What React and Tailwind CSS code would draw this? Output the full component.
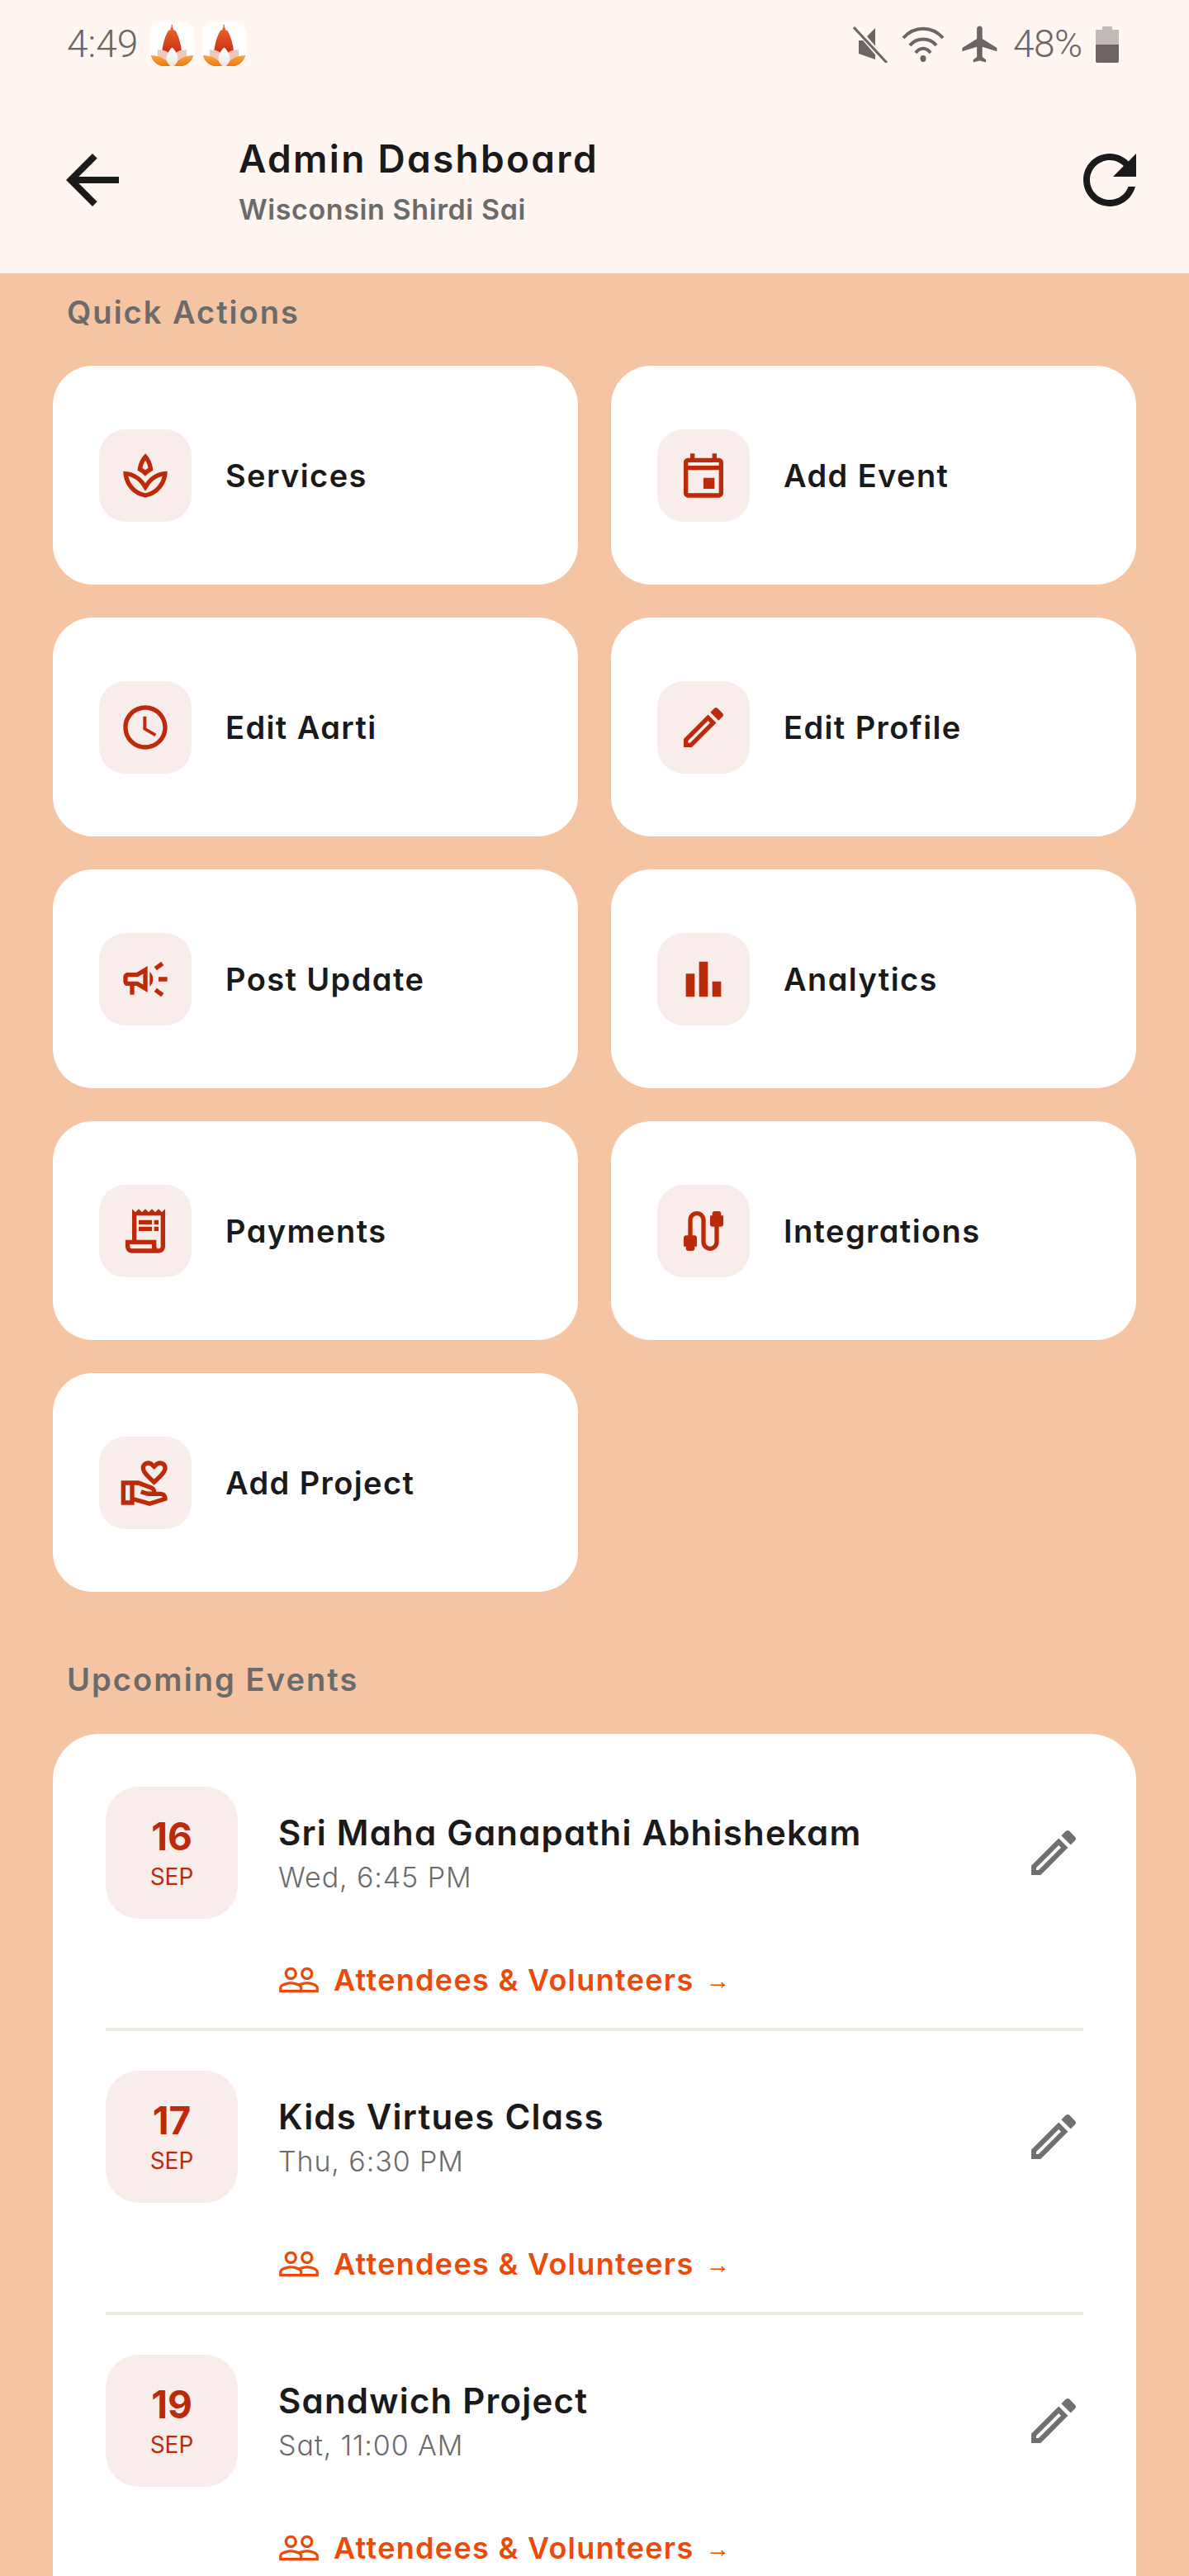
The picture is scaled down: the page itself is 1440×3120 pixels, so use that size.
import React from "react";

const P = {
  spa: "M15.49 9.63c-.18-2.79-1.31-5.51-3.44-7.65-2.15 2.14-3.35 4.86-3.59 7.65 1.28.68 2.46 1.56 3.49 2.63 1.03-1.06 2.21-1.94 3.54-2.63zm-3.45-4.5c.63 1.03 1.07 2.18 1.3 3.38-.47.3-.92.63-1.35.98-.42-.34-.87-.67-1.33-.97.25-1.2.71-2.35 1.38-3.39zM12 15.45c-.82-1.25-1.86-2.34-3.06-3.2-.13-.09-.27-.16-.4-.26.13.09.27.17.39.25C6.98 10.83 4.59 10 2 10c0 5.32 3.36 9.82 8.03 11.49.63.23 1.29.4 1.97.51.68-.12 1.33-.29 1.97-.51C18.64 19.82 22 15.32 22 10c-4.18 0-7.85 2.17-10 5.45zm1.32 4.15c-.44.15-.88.27-1.33.37-.44-.09-.87-.21-1.28-.36-3.29-1.18-5.7-3.99-6.45-7.35 1.1.26 2.15.71 3.12 1.33l-.02.01c.13.09.26.18.39.25l.07.04c.99.72 1.84 1.61 2.51 2.65L12 19.1l1.67-2.55c.69-1.05 1.55-1.95 2.53-2.66l.07-.05c.09-.05.18-.11.27-.17l-.01-.02c.98-.65 2.07-1.13 3.21-1.4-.75 3.37-3.15 6.18-6.42 7.35z",
  event: "M19 4h-1V2h-2v2H8V2H6v2H5c-1.11 0-1.99.9-1.99 2L3 20c0 1.1.89 2 2 2h14c1.1 0 2-.9 2-2V6c0-1.1-.9-2-2-2zm0 16H5V9.5h14V20zm0-12.5H5V6h14v1.5zM17 13h-5v5h5v-5z",
  clock: "M11.99 2C6.47 2 2 6.48 2 12s4.47 10 9.99 10C17.52 22 22 17.52 22 12S17.52 2 11.99 2zM12 20c-4.42 0-8-3.58-8-8s3.58-8 8-8 8 3.58 8 8-3.58 8-8 8zm.5-13H11v6l5.25 3.15.75-1.23-4.5-2.67z",
  edit: "M14.06 9.02l.92.92L5.92 19H5v-.92l9.06-9.06M17.66 3c-.25 0-.51.1-.7.29l-1.83 1.83 3.75 3.75 1.83-1.83c.39-.39.39-1.02 0-1.41l-2.34-2.34c-.2-.2-.45-.29-.71-.29zm-3.6 3.19L3 17.25V21h3.75L17.81 9.94l-3.75-3.75z",
  campaign: "M18 11v2h4v-2h-4zm-2 6.61c.96.71 2.21 1.65 3.2 2.39.4-.53.8-1.07 1.2-1.6-.99-.74-2.24-1.68-3.2-2.4-.4.54-.8 1.08-1.2 1.61zM20.4 5.6c-.4-.53-.8-1.07-1.2-1.6-.99.74-2.24 1.68-3.2 2.4.4.53.8 1.07 1.2 1.6.96-.72 2.21-1.65 3.2-2.4zM4 9c-1.1 0-2 .9-2 2v2c0 1.1.9 2 2 2h1v4h2v-4h1l5 3V6L8 9H4zm5.03 1.71L11 9.53v4.94l-1.97-1.18-.48-.29H4v-2h4.55l.48-.29zM15.5 12c0-1.33-.58-2.53-1.5-3.35v6.69c.92-.81 1.5-2.01 1.5-3.34z",
  bar: "M4 9.5h4V20H4zM10 4h4v16h-4zM16 13h4v7h-4z",
  receipt: "M19.5 3.5L18 2l-1.5 1.5L15 2l-1.5 1.5L12 2l-1.5 1.5L9 2 7.5 3.5 6 2v14H3v3c0 1.66 1.34 3 3 3h12c1.66 0 3-1.34 3-3V2l-1.5 1.5zM15 20H6c-.55 0-1-.45-1-1v-1h10v2zm4-1c0 .55-.45 1-1 1s-1-.45-1-1v-3H8V5h11v14zM9 7h6v2H9zM16 7h2v2h-2zM9 10h6v2H9zM16 10h2v2h-2z",
  cable: "M20 5V4c0-.55-.45-1-1-1h-2c-.55 0-1 .45-1 1v1h-1v4c0 .55.45 1 1 1h1v7c0 1.1-.9 2-2 2s-2-.9-2-2V7c0-2.21-1.79-4-4-4S5 4.79 5 7v7H4c-.55 0-1 .45-1 1v4h1v1c0 .55.45 1 1 1h2c.55 0 1-.45 1-1v-1h1v-4c0-.55-.45-1-1-1H7V7c0-1.1.9-2 2-2s2 .9 2 2v10c0 2.21 1.79 4 4 4s4-1.79 4-4v-7h1c.55 0 1-.45 1-1V5h-1z",
  hand: "M16 13c3.09-2.81 6-5.44 6-7.7C22 3.45 20.55 2 18.7 2c-1.04 0-2.05.49-2.7 1.25C15.34 2.49 14.34 2 13.3 2 11.45 2 10 3.45 10 5.3c0 2.26 2.91 4.89 6 7.7zm-2.7-9c.44 0 .89.21 1.18.55L16 6l1.52-1.45c.29-.34.74-.55 1.18-.55.74 0 1.3.56 1.3 1.3 0 1.12-2.04 3.17-4 4.99-1.96-1.82-4-3.87-4-4.99 0-.74.56-1.3 1.3-1.3zM19 16h-2c0-1.2-.75-2.28-1.87-2.7L8.97 11H1v11h6v-1.44l7 1.94 8-2.5v-1c0-1.66-1.34-3-3-3zM3 20v-7h2v7H3zm10.97.41L7 18.5V13h1.61l5.82 2.17c.34.13.57.46.57.83 0 0-1.99-.05-2.3-.15l-2.38-.79-.63 1.9 2.38.79c.51.17 1.04.26 1.58.26H19c.39 0 .74.23.9.56l-5.93 1.85z",
  back: "M20 11H7.83l5.59-5.59L12 4l-8 8 8 8 1.41-1.41L7.83 13H20v-2z",
  refresh: "M17.65 6.35C16.2 4.9 14.21 4 12 4c-4.42 0-7.99 3.58-7.99 8s3.57 8 7.99 8c3.73 0 6.84-2.55 7.73-6h-2.08c-.82 2.33-3.04 4-5.65 4-3.31 0-6-2.69-6-6s2.69-6 6-6c1.66 0 3.14.69 4.22 1.78L13 11h7V4l-2.35 2.35z",
  people: "M16.5 13c-1.2 0-3.07.34-4.5 1-1.43-.67-3.3-1-4.5-1C5.33 13 1 14.08 1 16.25V19h22v-2.75c0-2.17-4.33-3.25-6.5-3.25zm-4 4.5h-10v-1.25c0-.54 2.56-1.75 5-1.75s5 1.21 5 1.75v1.25zm9 0H14v-1.25c0-.46-.2-.86-.52-1.22.88-.3 1.96-.53 3.02-.53 2.44 0 5 1.21 5 1.75v1.25zM7.5 12c1.93 0 3.5-1.57 3.5-3.5S9.43 5 7.5 5 4 6.57 4 8.5 5.57 12 7.5 12zm0-5.5c1.1 0 2 .9 2 2s-.9 2-2 2-2-.9-2-2 .9-2 2-2zm9 5.5c1.93 0 3.5-1.57 3.5-3.5S18.43 5 16.5 5 13 6.57 13 8.5s1.57 3.5 3.5 3.5zm0-5.5c1.1 0 2 .9 2 2s-.9 2-2 2-2-.9-2-2 .9-2 2-2z",
};

function Icon({ d, className }) {
  return (
    <svg viewBox="0 0 24 24" fill="currentColor" className={className}>
      <path d={d} />
    </svg>
  );
}

function Logo({ id }) {
  return (
    <svg viewBox="0 0 156 156" className="w-[53px] h-[53px] shrink-0">
      <defs>
        <linearGradient id={`f${id}`} x1="0" y1="0" x2="0" y2="1">
          <stop offset="0" stopColor="#ee6a2c" />
          <stop offset="1" stopColor="#c92c12" />
        </linearGradient>
        <linearGradient id={`o${id}`} x1="0" y1="0" x2="0" y2="1">
          <stop offset="0" stopColor="#f9a441" />
          <stop offset="1" stopColor="#ec7a14" />
        </linearGradient>
        <linearGradient id={`w${id}`} x1="0" y1="0" x2="0" y2="1">
          <stop offset="0" stopColor="#ffffff" />
          <stop offset="1" stopColor="#e9e9e9" />
        </linearGradient>
      </defs>
      <rect x="0" y="0" width="156" height="156" rx="36" fill="#ffffff" />
      <path d="M75 8h4v12h3v8h6c12 16 22 50 25 84H41c3-34 13-68 25-84h6v-8h3z" fill={`url(#f${id})`} />
      <path d="M26 98c14 0 26 2 36 8l14 50H46c-14-6-22-30-20-58z" fill="#edc9bf" />
      <path d="M130 98c-14 0-26 2-36 8l-14 50h30c14-6 22-30 20-58z" fill="#edc9bf" />
      <path d="M2 118c22 0 40 6 54 18 8 7 12 14 14 20H40C20 152 8 138 2 118z" fill={`url(#o${id})`} />
      <path d="M154 118c-22 0-40 6-54 18-8 7-12 14-14 20h30c20-4 32-18 38-38z" fill={`url(#o${id})`} />
      <path d="M78 90c12 10 20 26 20 40 0 12-8 22-20 27-12-5-20-15-20-27 0-14 8-30 20-40z" fill={`url(#w${id})`} />
    </svg>
  );
}

const actions = [
  ["Services", P.spa],
  ["Add Event", P.event],
  ["Edit Aarti", P.clock],
  ["Edit Profile", P.edit],
  ["Post Update", P.campaign],
  ["Analytics", P.bar],
  ["Payments", P.receipt],
  ["Integrations", P.cable],
  ["Add Project", P.hand],
];

const events = [
  ["16", "Sri Maha Ganapathi Abhishekam", "Wed, 6:45 PM"],
  ["17", "Kids Virtues Class", "Thu, 6:30 PM"],
  ["19", "Sandwich Project", "Sat, 11:00 AM"],
];

const poppins = "[font-family:Inter,sans-serif] [font-feature-settings:'cv11']";

export default function App() {
  return (
    <div className={`w-[1440px] h-[3120px] overflow-hidden bg-[#f5c4a3] ${poppins}`}>
      <header className="h-[331px] bg-[#fff5f1] flex flex-col">
        <div className="h-[110px] flex items-start justify-between pl-[81px] pr-[85px] pt-[27px] text-[#6b6663] [font-family:Roboto,sans-serif] [font-feature-settings:normal]">
          <div className="flex items-center gap-[10px] h-[53px]">
            <span className="text-[46px] leading-[53px] font-light w-[91px]">4:49</span>
            <Logo id="a" />
            <Logo id="b" />
          </div>
          <div className="flex items-center h-[53px]">
            <svg viewBox="0 0 44 44" className="w-[44px] h-[44px] mr-[15px]">
              <path d="M7 15h5l15-15v38L7 31z" fill="#6b6663" transform="translate(0 2)" />
              <path d="M2 0l38 44" stroke="#fff5f1" strokeWidth="7" />
              <path d="M1 1l40 43" stroke="#6b6663" strokeWidth="3" />
            </svg>
            <svg viewBox="0 0 52 44" className="w-[52px] h-[44px] mr-[17px]" fill="none" stroke="#6b6663" strokeWidth="4">
              <path d="M2 14C15 -1 37 -1 50 14" />
              <path d="M10 23C18 13 34 13 42 23" />
              <path d="M17 32C22 25 30 25 35 32" />
              <ellipse cx="26" cy="39" rx="3.5" ry="4" fill="#6b6663" stroke="none" />
            </svg>
            <svg viewBox="0 0 24 24" fill="#6b6663" className="w-[53px] h-[53px] mr-[13px]">
              <path d="M21 16v-2l-8-5V3.5c0-.83-.67-1.5-1.5-1.5S10 2.67 10 3.5V9l-8 5v2l8-2.5V19l-2 1.5V22l3.5-1 3.5 1v-1.5L13 19v-5.5l8 2.5z" />
            </svg>
            <span className="text-[46px] leading-[53px] font-light w-[90px] tracking-[-0.5px]">48%</span>
            <div className="ml-[10px] w-[28px] h-[44px] relative flex flex-col items-center">
              <div className="w-[12px] h-[4px] bg-[#c1bab6] rounded-t-[1px]" />
              <div className="w-[28px] h-[18px] bg-[#c1bab6] rounded-t-[1px]" />
              <div className="w-[28px] h-[22px] bg-[#6b6663] rounded-b-[2px]" />
            </div>
          </div>
        </div>
        <div className="flex items-start pl-[64px] pr-[48px] pt-[50px]">
          <Icon d={P.back} className="w-[96px] h-[96px] text-[#1a1a1a] shrink-0 mt-[10px]" />
          <div className="ml-[129px] flex-1">
            <div className="text-[46px] leading-[64px] font-semibold text-[#1a1a1a] tracking-[2.3px] whitespace-nowrap">Admin Dashboard</div>
            <div className="text-[34px] leading-[48px] font-semibold text-[#6b6b6b] mt-[6px] tracking-[0.6px] whitespace-nowrap">Wisconsin Shirdi Sai</div>
          </div>
          <Icon d={P.refresh} className="w-[96px] h-[96px] text-[#1a1a1a] shrink-0 mt-[10px]" />
        </div>
      </header>

      <main className="px-[64px]">
        <h2 className="pl-[17px] text-[38px] leading-[48px] h-[112px] pt-[23px] font-semibold text-[#6b6b6b] tracking-[2px]">Quick Actions</h2>
        <div className="grid grid-cols-2 gap-[40px]">
          {actions.map(([label, d]) => (
            <div key={label} className="h-[265px] bg-white rounded-[48px] flex items-center pl-[56px]">
              <div className="w-[112px] h-[112px] rounded-[32px] bg-[#f9edeb] flex items-center justify-center shrink-0">
                <Icon d={d} className="w-[64px] h-[64px] text-[#bd2a0a]" />
              </div>
              <span className="ml-[41px] pt-[2px] text-[38px] font-semibold text-[#1a1a1a] tracking-[1.4px] whitespace-nowrap">{label}</span>
            </div>
          ))}
        </div>

        <h2 className="pl-[17px] mt-[82px] h-[90px] text-[38px] leading-[48px] font-semibold text-[#6b6b6b] tracking-[2.1px]">Upcoming Events</h2>
        <div className="bg-white rounded-[56px] p-[64px]">
          {events.map(([day, title, time]) => (
            <div key={day} className="border-b-4 border-[#f0ece4] pb-[40px] mb-[48px]">
              <div className="flex items-start">
                <div className="w-[160px] h-[160px] rounded-[40px] bg-[#f9edeb] flex flex-col items-center justify-center text-[#bd2a0a] shrink-0">
                  <span className="text-[46px] leading-[54px] font-bold">{day}</span>
                  <span className="text-[28px] leading-[36px] mt-[4px] font-normal">SEP</span>
                </div>
                <div className="ml-[49px] flex-1 pt-[28px]">
                  <div className="text-[42px] leading-[56px] font-semibold text-[#1a1a1a] tracking-[1.2px] whitespace-nowrap">{title}</div>
                  <div className="text-[34px] leading-[44px] mt-[4px] font-[350] text-[#6b6b6b] tracking-[0.9px] whitespace-nowrap">{time}</div>
                </div>
                <Icon d={P.edit} className="w-[72px] h-[72px] text-[#6f6f6f] mt-[44px] shrink-0" />
              </div>
              <div className="ml-[210px] mt-[56px] h-[36px] flex items-center text-[#eb4a0a]">
                <Icon d={P.people} className="w-[52px] h-[52px] -ml-[2px] shrink-0" />
                <span className="ml-[16px] text-[36px] font-semibold tracking-[1.3px] whitespace-nowrap">Attendees &amp; Volunteers</span>
                <span className="ml-[14px] text-[30px] font-normal [font-family:'Liberation_Sans',sans-serif]">→</span>
              </div>
            </div>
          ))}
        </div>
      </main>
    </div>
  );
}
